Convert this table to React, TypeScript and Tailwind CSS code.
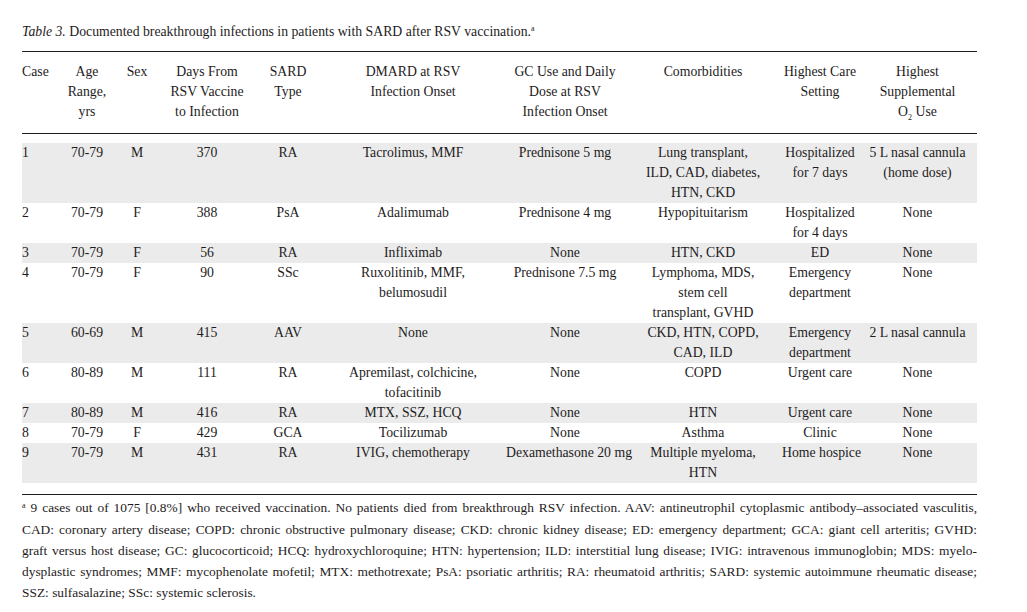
import React from 'react';

type Row = {
  cells: string[][];
  shaded: boolean;
};

const rows: Row[] = [
  {
    shaded: true,
    cells: [['1'], ['70-79'], ['M'], ['370'], ['RA'], ['Tacrolimus, MMF'], ['Prednisone 5 mg'], ['Lung transplant,', 'ILD, CAD, diabetes,', 'HTN, CKD'], ['Hospitalized', 'for 7 days'], ['5 L nasal cannula', '(home dose)']],
  },
  {
    shaded: false,
    cells: [['2'], ['70-79'], ['F'], ['388'], ['PsA'], ['Adalimumab'], ['Prednisone 4 mg'], ['Hypopituitarism'], ['Hospitalized', 'for 4 days'], ['None']],
  },
  {
    shaded: true,
    cells: [['3'], ['70-79'], ['F'], ['56'], ['RA'], ['Infliximab'], ['None'], ['HTN, CKD'], ['ED'], ['None']],
  },
  {
    shaded: false,
    cells: [['4'], ['70-79'], ['F'], ['90'], ['SSc'], ['Ruxolitinib, MMF,', 'belumosudil'], ['Prednisone 7.5 mg'], ['Lymphoma, MDS,', 'stem cell', 'transplant, GVHD'], ['Emergency', 'department'], ['None']],
  },
  {
    shaded: true,
    cells: [['5'], ['60-69'], ['M'], ['415'], ['AAV'], ['None'], ['None'], ['CKD, HTN, COPD,', 'CAD, ILD'], ['Emergency', 'department'], ['2 L nasal cannula']],
  },
  {
    shaded: false,
    cells: [['6'], ['80-89'], ['M'], ['111'], ['RA'], ['Apremilast, colchicine,', 'tofacitinib'], ['None'], ['COPD'], ['Urgent care'], ['None']],
  },
  {
    shaded: true,
    cells: [['7'], ['80-89'], ['M'], ['416'], ['RA'], ['MTX, SSZ, HCQ'], ['None'], ['HTN'], ['Urgent care'], ['None']],
  },
  {
    shaded: false,
    cells: [['8'], ['70-79'], ['F'], ['429'], ['GCA'], ['Tocilizumab'], ['None'], ['Asthma'], ['Clinic'], ['None']],
  },
  {
    shaded: true,
    cells: [['9'], ['70-79'], ['M'], ['431'], ['RA'], ['IVIG, chemotherapy'], ['Dexamethasone 20 mg'], ['Multiple myeloma,', 'HTN'], ['Home hospice'], ['None']],
  },
];

const widths = ['w-[36px]', 'w-[58px]', 'w-[42px]', 'w-[98px]', 'w-[64px]', 'w-[186px]', 'w-[118px]', 'w-[158px]', 'w-[76px]', 'w-[119px]'];

function Lines({ lines }: { lines: React.ReactNode[] }) {
  return (
    <>
      {lines.map((l, i) => (
        <div key={i} className="whitespace-nowrap">
          {l}
        </div>
      ))}
    </>
  );
}

const header: React.ReactNode[][] = [
  ['Case'],
  ['Age', 'Range,', 'yrs'],
  ['Sex'],
  ['Days From', 'RSV Vaccine', 'to Infection'],
  ['SARD', 'Type'],
  ['DMARD at RSV', 'Infection Onset'],
  ['GC Use and Daily', 'Dose at RSV', 'Infection Onset'],
  ['Comorbidities'],
  ['Highest Care', 'Setting'],
  [
    'Highest',
    'Supplemental',
    <>
      O<span className="relative top-[4px] text-[8px]">2</span> Use
    </>,
  ],
];

const footnote = [
  '9 cases out of 1075 [0.8%] who received vaccination. No patients died from breakthrough RSV infection. AAV: antineutrophil cytoplasmic antibody–associated vasculitis,',
  'CAD: coronary artery disease; COPD: chronic obstructive pulmonary disease; CKD: chronic kidney disease; ED: emergency department; GCA: giant cell arteritis; GVHD:',
  'graft versus host disease; GC: glucocorticoid; HCQ: hydroxychloroquine; HTN: hypertension; ILD: interstitial lung disease; IVIG: intravenous immunoglobin; MDS: myelo-',
  'dysplastic syndromes; MMF: mycophenolate mofetil; MTX: methotrexate; PsA: psoriatic arthritis; RA: rheumatoid arthritis; SARD: systemic autoimmune rheumatic disease;',
  'SSZ: sulfasalazine; SSc: systemic sclerosis.',
];

export default function App() {
  return (
    <div className="min-h-screen bg-white pl-[22px] pt-[22px] font-['Liberation_Serif',serif] text-[13.75px] leading-[20px] text-[#1e1b1c]">
      <div className="w-[955px]">
        {/* Caption */}
        <p className="mb-[7px] leading-[20px]">
          <span className="italic">Table 3.</span> Documented breakthrough infections in patients with SARD after RSV vaccination.
          <span className="relative -top-[5px] text-[8px]">a</span>
        </p>

        <table className="w-full table-fixed border-collapse">
          <colgroup>
            {widths.map((w, i) => (
              <col key={i} className={w} />
            ))}
          </colgroup>
          <thead>
            <tr className="border-y-[1.5px] border-[#1e1b1c]">
              {header.map((h, i) => (
                <th key={i} className={`pt-[10px] pb-[9px] align-top font-normal ${i === 0 ? 'text-left' : 'text-center'}`}>
                  <Lines lines={h} />
                </th>
              ))}
            </tr>
          </thead>
          <tbody>
            <tr className="h-[9px]">
              <td colSpan={10} />
            </tr>
            {rows.map((r, ri) => (
              <tr key={ri} className={r.shaded ? 'bg-[#ebebeb]' : 'bg-white'}>
                {r.cells.map((c, ci) => (
                  <td key={ci} className={`p-0 align-top ${ci === 0 ? 'text-left' : 'text-center'}`}>
                    <Lines lines={c} />
                  </td>
                ))}
              </tr>
            ))}
          </tbody>
        </table>

        {/* Footnote */}
        <div className="mt-[11px] border-t-[1.5px] border-[#1e1b1c] pt-[3px] text-[13.4px] leading-[20.75px]">
          {footnote.map((line, i) => (
            <div
              key={i}
              className={i < footnote.length - 1 ? 'text-justify [text-align-last:justify]' : 'whitespace-nowrap'}
            >
              {i === 0 && <span className="relative -top-[4px] text-[8px]">a</span>}
              {i === 0 && ' '}
              {line}
            </div>
          ))}
        </div>
      </div>
    </div>
  );
}
